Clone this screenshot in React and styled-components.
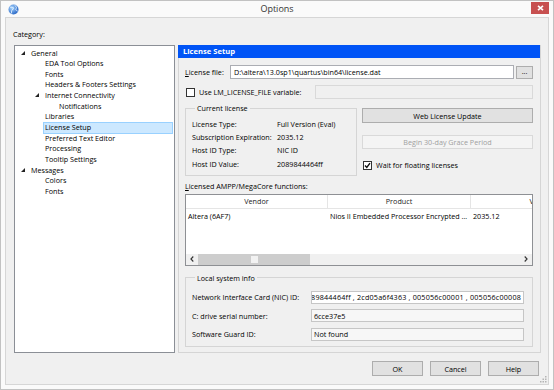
import React from "react"
import styled, { createGlobalStyle } from "styled-components"

const treeItems = [
  { label: "General", level: 0, open: true },
  { label: "EDA Tool Options", level: 1 },
  { label: "Fonts", level: 1 },
  { label: "Headers & Footers Settings", level: 1 },
  { label: "Internet Connectivity", level: 1, open: true },
  { label: "Notifications", level: 2 },
  { label: "Libraries", level: 1 },
  { label: "License Setup", level: 1, selected: true },
  { label: "Preferred Text Editor", level: 1 },
  { label: "Processing", level: 1 },
  { label: "Tooltip Settings", level: 1 },
  { label: "Messages", level: 0, open: true },
  { label: "Colors", level: 1 },
  { label: "Fonts", level: 1 },
]

const licenseInfo = [
  ["License Type:", "Full Version (Eval)"],
  ["Subscription Expiration:", "2035.12"],
  ["Host ID Type:", "NIC ID"],
  ["Host ID Value:", "2089844464ff"],
]

export default function App() {
  return (
    <>
      <Global />
      <Window>
        <TitleBar>
          <AppIcon>
            <svg width="11" height="11" viewBox="0 0 11 11">
              <defs>
                <radialGradient id="globe" cx="35%" cy="35%" r="75%">
                  <stop offset="0" stopColor="#a8d6ff" />
                  <stop offset="1" stopColor="#1c5cc0" />
                </radialGradient>
              </defs>
              <circle cx="5.5" cy="5.5" r="5" fill="url(#globe)" />
              <path d="M2.2 3.4c1-.6 1.7.4 2.6 0s.6 1.9-.4 2.5S3.2 7.6 3.7 9.4" stroke="#e6f3ff" strokeWidth="1" fill="none" />
              <path d="M6.8 1.2c.3 1 1.4 1 1.6 2.2s-.9 1.2-.5 2.4 1.4.8 1.9 1.6" stroke="#e6f3ff" strokeWidth=".9" fill="none" />
            </svg>
          </AppIcon>
          <Title>Options</Title>
          <CloseButton>
            <svg width="7" height="6" viewBox="0 0 7 6">
              <path d="M1 0.8 6 5.2M6 0.8 1 5.2" stroke="#fff" strokeWidth="1.6" />
            </svg>
          </CloseButton>
        </TitleBar>

        <Client>
          <CategoryLabel>Category:</CategoryLabel>
          <MainRow>
            <Tree>
              {treeItems.map((item, i) => (
                <TreeRow key={i} $level={item.level}>
                  <Toggle>
                    {item.open && (
                      <svg width="4" height="4" viewBox="0 0 4 4">
                        <polygon points="4,0 4,4 0,4" fill="#222" />
                      </svg>
                    )}
                  </Toggle>
                  <TreeLabel $selected={item.selected}>{item.label}</TreeLabel>
                </TreeRow>
              ))}
            </Tree>

            <Panel>
              <PanelHeader>License Setup</PanelHeader>
              <PanelBody>
                <FieldRow $top={7}>
                  <FieldLabel $w={45}>
                    <u>L</u>icense file:
                  </FieldLabel>
                  <TextBox>D:\altera\13.0sp1\quartus\bin64\license.dat</TextBox>
                  <BrowseButton>...</BrowseButton>
                </FieldRow>

                <FieldRow $top={6}>
                  <CheckBox />
                  <CheckText>Use LM_LICENSE_FILE variable:</CheckText>
                  <TextBox $disabled $w={218}></TextBox>
                </FieldRow>

                <TwoCol>
                  <Group $w={172} $pad="5px 0 4px 6px">
                    <Legend>Current license</Legend>
                    {licenseInfo.map(([k, v]) => (
                      <InfoRow key={k}>
                        <InfoKey>{k}</InfoKey>
                        <span>{v}</span>
                      </InfoRow>
                    ))}
                  </Group>
                  <RightCol>
                    <PushButton $top={5} $h={15}>Web License Update</PushButton>
                    <PushButton $top={12} $h={14} disabled>
                      Begin 30-day Grace Period
                    </PushButton>
                    <CheckLine>
                      <CheckBox $checked>
                        <svg width="7" height="7" viewBox="0 0 7 7">
                          <path d="M1 3.6 2.8 5.5 6 1.2" stroke="#111" strokeWidth="1.4" fill="none" />
                        </svg>
                      </CheckBox>
                      <CheckText>Wait for floating licenses</CheckText>
                    </CheckLine>
                  </RightCol>
                </TwoCol>

                <SectionLabel>
                  <u>L</u>icensed AMPP/MegaCore functions:
                </SectionLabel>
                <Table>
                  <TableRows>
                    <Row $head>
                      <Cell $head $w={142}>Vendor</Cell>
                      <Cell $head $w={143}>Product</Cell>
                      <Cell $head $w={143}>Version</Cell>
                    </Row>
                    <Row>
                      <Cell $w={142}>Altera (6AF7)</Cell>
                      <Cell $w={143}>Nios II Embedded Processor Encrypted Core</Cell>
                      <Cell $w={143}>2035.12</Cell>
                    </Row>
                  </TableRows>
                  <HScroll>
                    <ScrollArrow>
                      <svg width="4" height="6" viewBox="0 0 4 6">
                        <path d="M3.3 0.5 0.9 3 3.3 5.5" stroke="#333" strokeWidth="1.1" fill="none" />
                      </svg>
                    </ScrollArrow>
                    <Track>
                      <Thumb>
                        <Grip />
                      </Thumb>
                    </Track>
                    <ScrollArrow>
                      <svg width="4" height="6" viewBox="0 0 4 6">
                        <path d="M0.7 0.5 3.1 3 0.7 5.5" stroke="#333" strokeWidth="1.1" fill="none" />
                      </svg>
                    </ScrollArrow>
                  </HScroll>
                </Table>

                <Group $top={7} $pad="8px 8px 5.5px 6px">
                  <Legend>Local system info</Legend>
                  <SysRow>
                    <SysKey>Network Interface Card (NIC) ID:</SysKey>
                    <SysValue $white>
                      <span>2089844464ff , 2cd05a6f4363 , 005056c00001 , 005056c00008</span>
                    </SysValue>
                  </SysRow>
                  <SysRow>
                    <SysKey>C: drive serial number:</SysKey>
                    <SysValue>
                      <span>6cce37e5</span>
                    </SysValue>
                  </SysRow>
                  <SysRow>
                    <SysKey>Software Guard ID:</SysKey>
                    <SysValue>
                      <span>Not found</span>
                    </SysValue>
                  </SysRow>
                </Group>
              </PanelBody>
            </Panel>
          </MainRow>

          <Footer>
            <DialogButton>OK</DialogButton>
            <DialogButton>Cancel</DialogButton>
            <DialogButton>Help</DialogButton>
          </Footer>

          <ResizeGrip>
            <svg width="7" height="7" viewBox="0 0 7 7" fill="#b4b4b4">
              <rect x="5" y="0" width="1.5" height="1.5" />
              <rect x="2.5" y="2.5" width="1.5" height="1.5" />
              <rect x="5" y="2.5" width="1.5" height="1.5" />
              <rect x="0" y="5" width="1.5" height="1.5" />
              <rect x="2.5" y="5" width="1.5" height="1.5" />
              <rect x="5" y="5" width="1.5" height="1.5" />
            </svg>
          </ResizeGrip>
        </Client>
      </Window>
    </>
  )
}

const Global = createGlobalStyle`
  html, body { margin: 0; padding: 0; background: #fff; }
  body {
    width: 554px;
    height: 390px;
    overflow: hidden;
    font-family: "Open Sans", "Liberation Sans", sans-serif;
    font-size: 7.2px;
    color: #000;
  }
  * { box-sizing: border-box; }
`

const Window = styled.div`
width: 554px;
height: 390px;
border: 1px solid #c2c2c2;
background: #fafafa;
display: flex;
flex-direction: column;
`

const TitleBar = styled.div`
height: 16px;
display: grid;
grid-template-columns: 1fr auto 1fr;
align-items: start;
`

const AppIcon = styled.div`
padding: 3px 0 0 7px;
height: 16px;
svg { display: block; }
`

const Title = styled.div`
font-size: 9px;
line-height: 16px;
color: #333;
`

const CloseButton = styled.div`
justify-self: end;
margin: 1px 4px 0 0;
width: 18px;
height: 12px;
background: #c75050;
display: flex;
align-items: center;
justify-content: center;
`

const Client = styled.div`
position: relative;
flex: 1;
min-width: 0;
margin: 0 4px 4px 4px;
border: 1px solid #d6d6d6;
background: #f0f0f0;
padding: 0 7px 0 8px;
display: flex;
flex-direction: column;
`

const CategoryLabel = styled.div`
margin: 11px 0 0 -1px;
line-height: 10px;
height: 10px;
`

const MainRow = styled.div`
margin-top: 6px;
height: 308px;
display: flex;
gap: 3px;
min-width: 0;
`

const Tree = styled.div`
width: 161px;
flex: none;
border: 1px solid #8b8f96;
background: #fff;
padding-top: 2px;
`

const TreeRow = styled.div`
display: flex;
align-items: center;
height: 10.65px;
padding-left: ${p => 6 + p.$level * 14}px;
`

const Toggle = styled.span`
width: 8px;
flex: none;
display: flex;
align-items: center;
svg { display: block; margin-top: -1px; }
`

const TreeLabel = styled.span`
flex: 1;
margin-right: 1px;
padding: 0 1px;
line-height: 9.6px;
white-space: nowrap;
border: 1px solid ${p => (p.$selected ? "#99d1ff" : "transparent")};
background: ${p => (p.$selected ? "#cce8ff" : "transparent")};
`

const Panel = styled.div`
flex: 1;
min-width: 0;
border: 1px solid #d5d5d5;
display: flex;
flex-direction: column;
`

const PanelHeader = styled.div`
height: 13px;
margin: -1px 0 0 -1px;
background: #0054f6;
color: #fff;
font-weight: bold;
font-size: 7.6px;
line-height: 13px;
padding-left: 5px;
`

const PanelBody = styled.div`
min-width: 0;
padding: 0 7px 0 6px;
display: flex;
flex-direction: column;
`

const FieldRow = styled.div`
display: flex;
align-items: center;
height: 14px;
margin-top: ${p => p.$top}px;
`

const FieldLabel = styled.span`
width: ${p => p.$w}px;
flex: none;
white-space: nowrap;
`

const TextBox = styled.div`
height: 14px;
min-width: 0;
${p => (p.$w ? `width: ${p.$w}px; flex: none; margin-left: auto;` : "flex: 1;")}
border: 1px solid ${p => (p.$disabled ? "#d9d9d9" : "#abadb3")};
background: ${p => (p.$disabled ? "#f0f0f0" : "#fff")};
padding: 0 3px;
line-height: 12px;
white-space: nowrap;
overflow: hidden;
`

const BrowseButton = styled.div`
width: 17px;
flex: none;
height: 13px;
margin-left: 2px;
border: 1px solid #adadad;
background: #e1e1e1;
text-align: center;
line-height: 9px;
`

const CheckBox = styled.span`
width: 9px;
height: 9px;
flex: none;
margin-left: 1px;
border: 1px solid #333;
background: #fff;
display: flex;
align-items: center;
justify-content: center;
svg { display: block; }
`

const CheckText = styled.span`
margin-left: 4px;
white-space: nowrap;
`

const TwoCol = styled.div`
margin-top: 4px;
display: flex;
gap: 5px;
`

const Group = styled.fieldset`
margin: ${p => p.$top || 0}px 0 0 0;
${p => (p.$w ? `width: ${p.$w}px; flex: none;` : "")}
min-width: 0;
padding: ${p => p.$pad};
border: 1px solid #d5d5d5;
`

const Legend = styled.legend`
margin-left: 3px;
padding: 0 2px;
line-height: 10px;
`

const InfoRow = styled.div`
display: flex;
height: 13.2px;
line-height: 13.2px;
`

const InfoKey = styled.span`
width: 85px;
flex: none;
`

const RightCol = styled.div`
flex: 1;
min-width: 0;
display: flex;
flex-direction: column;
`

const PushButton = styled.button`
margin-top: ${p => p.$top}px;
height: ${p => p.$h}px;
padding: 0;
font: inherit;
color: ${p => (p.disabled ? "#a0a0a0" : "#000")};
background: ${p => (p.disabled ? "#f4f4f4" : "#e1e1e1")};
border: 1px solid ${p => (p.disabled ? "#d9d9d9" : "#adadad")};
border-radius: 0;
`

const CheckLine = styled.div`
margin-top: 11px;
display: flex;
align-items: center;
height: 10px;
`

const SectionLabel = styled.div`
margin-top: 5px;
line-height: 10px;
`

const Table = styled.div`
margin-top: 3px;
height: 72px;
min-width: 0;
border: 1px solid #8e9094;
background: #fff;
display: flex;
flex-direction: column;
overflow: hidden;
`

const TableRows = styled.div`
flex: 1;
min-width: 0;
overflow: hidden;
`

const Row = styled.div`
display: flex;
width: max-content;
height: 14px;
line-height: ${p => (p.$head ? 13 : 14)}px;
border-bottom: ${p => (p.$head ? "1px solid #e5e5e5" : "none")};
`

const Cell = styled.div`
width: ${p => p.$w}px;
flex: none;
padding: 0 2px;
white-space: nowrap;
overflow: hidden;
text-overflow: ellipsis;
text-align: ${p => (p.$head ? "center" : "left")};
color: ${p => (p.$head ? "#222" : "#000")};
border-right: ${p => (p.$head ? "1px solid #e5e5e5" : "none")};
`

const HScroll = styled.div`
height: 11px;
flex: none;
display: flex;
background: #f0f0f0;
`

const ScrollArrow = styled.div`
width: 12px;
flex: none;
display: flex;
align-items: center;
justify-content: center;
svg { display: block; }
`

const Track = styled.div`
flex: 1;
display: flex;
align-items: stretch;
`

const Thumb = styled.div`
width: 112px;
background: #cdcdcd;
display: flex;
align-items: center;
justify-content: center;
`

const Grip = styled.span`
width: 7px;
height: 7px;
background: #f2f2f2;
`

const SysRow = styled.div`
display: flex;
align-items: center;
height: 13px;
& + & { margin-top: 5.5px; }
`

const SysKey = styled.span`
width: 119px;
flex: none;
white-space: nowrap;
`

const SysValue = styled.div`
flex: 1;
min-width: 0;
height: 13px;
border: 1px solid #c6c6c6;
background: ${p => (p.$white ? "#fff" : "#f7f7f7")};
padding: 0 2px;
display: flex;
align-items: center;
justify-content: ${p => (p.$white ? "flex-end" : "flex-start")};
overflow: hidden;
white-space: nowrap;
letter-spacing: ${p => (p.$white ? "0.2px" : "normal")};
span { flex: none; }
`

const Footer = styled.div`
margin-top: 8px;
padding-right: 2px;
display: flex;
justify-content: flex-end;
gap: 7px;
`

const DialogButton = styled.button`
width: 51px;
height: 15px;
padding: 0;
font: inherit;
color: #000;
background: #e1e1e1;
border: 1px solid #adadad;
border-radius: 0;
`

const ResizeGrip = styled.div`
position: absolute;
right: 1px;
bottom: 1px;
svg { display: block; }
`
